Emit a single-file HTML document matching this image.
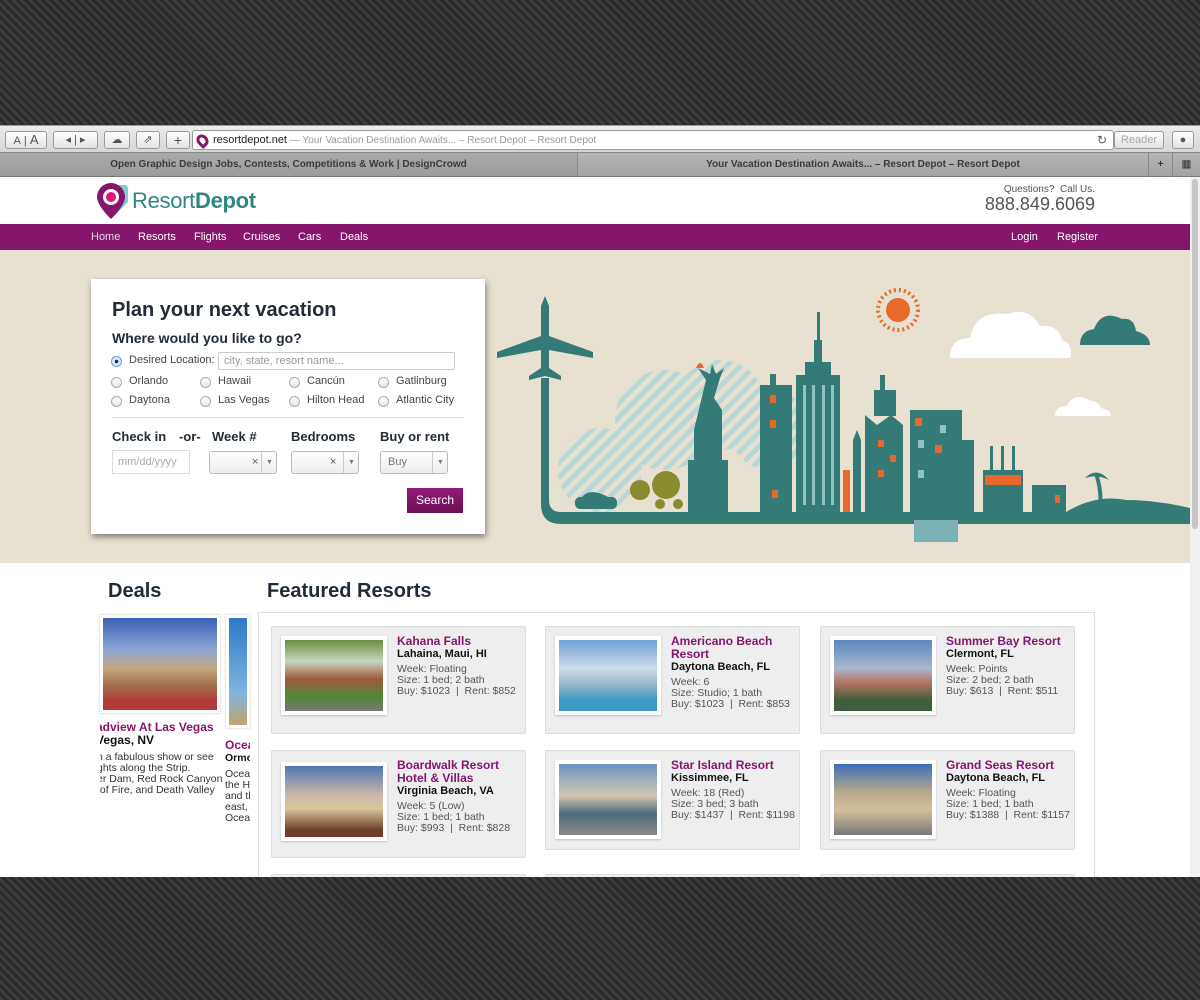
<!DOCTYPE html>
<html><head><meta charset="utf-8">
<style>
*{margin:0;padding:0;box-sizing:border-box}
body{width:1200px;height:1000px;overflow:hidden;font-family:"Liberation Sans",Arial,sans-serif;background:#2e2e2e;position:relative}
.carbon{position:absolute;left:0;width:1200px;background:repeating-linear-gradient(45deg,#3c3c3c 0 3px,#2a2a2a 3px 6px)}
.abs{position:absolute}
.tb{left:0;top:125px;width:1200px;height:28px;background:linear-gradient(#ececec,#d6d6d6);border-top:1px solid #999;border-bottom:1px solid #888}
.btn{position:absolute;top:5px;height:18px;border:1px solid #9a9a9a;border-radius:3px;background:linear-gradient(#fff,#e2e2e2);font-size:11px;color:#555;text-align:center;line-height:16px}
.url{position:absolute;left:192px;top:4px;width:922px;height:20px;background:#fff;border:1px solid #9a9a9a;border-radius:3px;font-size:10px;line-height:18px;color:#999;padding-left:20px}
.tabs{left:0;top:153px;width:1200px;height:24px;background:linear-gradient(#b5b5b5,#a3a3a3);border-bottom:1px solid #777;font-size:10px;font-weight:bold;color:#3a3a3a;line-height:24px}
.page{left:0;top:177px;width:1190px;height:700px;background:#fff;overflow:hidden}
.scroll{left:1190px;top:177px;width:10px;height:700px;background:#f0f0f0}
.nav{position:absolute;left:0;top:47px;width:1190px;height:26px;background:#86166b;color:#fff;font-size:11px;line-height:26px}
.nav span{position:absolute}
.hero{position:absolute;left:0;top:73px;width:1190px;height:313px;background:#e8e0d0}
.form{position:absolute;left:91px;top:29px;width:394px;height:255px;background:#fff;box-shadow:1px 3px 6px rgba(0,0,0,.45)}
.radio{position:absolute;width:11px;height:11px;border:1px solid #aaa;border-radius:50%;background:linear-gradient(#fff,#e6e6e6)}
.lbl{position:absolute;font-size:11px;color:#444}
.sel{position:absolute;height:23px;border:1px solid #bbb;border-radius:3px;background:linear-gradient(#fff,#ececec);font-size:11px;color:#777}
.card{position:absolute;width:255px;background:#eee;border:1px solid #ddd;border-radius:2px}
.ph{position:absolute;left:9px;top:9px;width:106px;height:79px;background:#fff;padding:4px;box-shadow:0 1px 2px rgba(0,0,0,.2)}
.ph div{width:100%;height:100%}
.ct{position:absolute;left:125px;top:8px;font-size:10.5px;line-height:11px;color:#555;white-space:nowrap}
.ct b.t{color:#86166b;font-size:12px;line-height:13px;display:block}
.ct b.l{color:#111;font-size:11px;line-height:13px;display:block}
</style></head><body>
<div class="carbon" style="top:0;height:125px"></div>
<div class="carbon" style="top:877px;height:123px"></div>
<div class="abs tb">
 <div class="btn" style="left:5px;width:42px">A&nbsp;|&nbsp;<span style="font-size:13px">A</span></div>
 <div class="btn" style="left:53px;width:45px">◂ | ▸</div>
 <div class="btn" style="left:104px;width:26px">☁</div>
 <div class="btn" style="left:136px;width:24px">⇗</div>
 <div class="btn" style="left:166px;width:24px;font-size:14px">+</div>
 <div class="url"><span style="position:absolute;left:4px;top:3px;width:11px;height:13px;border-radius:50% 50% 50% 0;transform:rotate(-45deg);border:3px solid #86166b"></span><span style="color:#222;font-size:11px">resortdepot.net</span> — Your Vacation Destination Awaits... – Resort Depot – Resort Depot<span style="position:absolute;right:6px;color:#555;font-size:12px">↻</span></div>
 <div class="btn" style="left:1114px;width:50px;color:#aaa">Reader</div>
 <div class="btn" style="left:1172px;width:22px">●</div>
</div>
<div class="abs tabs">
 <div style="position:absolute;left:0;width:578px;text-align:center;background:linear-gradient(#aaa,#9c9c9c);height:23px;border-right:1px solid #888">Open Graphic Design Jobs, Contests, Competitions &amp; Work | DesignCrowd</div>
 <div style="position:absolute;left:578px;width:570px;text-align:center">Your Vacation Destination Awaits... – Resort Depot – Resort Depot</div>
 <div style="position:absolute;left:1148px;width:24px;text-align:center;border-left:1px solid #888">+</div>
 <div style="position:absolute;left:1172px;width:28px;text-align:center;border-left:1px solid #888">▥</div>
</div>
<div class="abs scroll"><div style="position:absolute;left:2px;top:2px;width:6px;height:350px;background:#c4c4c4;border-radius:3px"></div></div>
<div class="abs page">
 <svg style="position:absolute;left:95px;top:4px" width="36" height="40" viewBox="0 0 36 40">
  <path d="M12 4 h18 a3 3 0 0 1 3 3 v14 l-14 14z" fill="#5ec3c0" opacity=".8"/>
  <path d="M16 2 a14 14 0 0 1 14 14 c0 9 -14 22 -14 22 c0 0 -14 -13 -14 -22 a14 14 0 0 1 14 -14z" fill="#86166b"/>
  <circle cx="16" cy="16" r="8" fill="#fff"/><circle cx="16" cy="16" r="5" fill="#e2127d"/>
 </svg>
 <div style="position:absolute;left:132px;top:11px;font-size:22px;color:#2f8682;letter-spacing:-.3px">Resort<b>Depot</b></div>
 <div style="position:absolute;right:95px;top:7px;text-align:right;color:#555"><div style="font-size:10px">Questions?&nbsp; Call Us.</div><div style="font-size:18px;line-height:18px">888.849.6069</div></div>
 <div class="nav">
  <span style="left:91px;color:#ddd">Home</span><span style="left:138px">Resorts</span><span style="left:194px">Flights</span><span style="left:243px">Cruises</span><span style="left:298px">Cars</span><span style="left:340px">Deals</span>
  <span style="left:1011px">Login</span><span style="left:1057px">Register</span>
 </div>
 <div class="hero">
  <svg style="position:absolute;left:0;top:0" width="1190" height="313" viewBox="0 250 1190 313">
   <defs><pattern id="st" width="10" height="10" patternUnits="userSpaceOnUse" patternTransform="rotate(45)"><rect width="5" height="10" fill="#b7d8d6"/></pattern></defs>
   <circle cx="600" cy="470" r="42" fill="url(#st)"/>
   <circle cx="665" cy="420" r="50" fill="url(#st)"/>
   <circle cx="720" cy="405" r="45" fill="url(#st)"/>
   <circle cx="770" cy="430" r="40" fill="url(#st)"/>
   <circle cx="898" cy="310" r="12" fill="#e8692a"/>
   <circle cx="898" cy="310" r="20" fill="none" stroke="#e8692a" stroke-width="4" stroke-dasharray="2 3"/>
   <path d="M950 358 q0-20 20-20 q5-28 38-24 q20-8 32 12 q18-2 22 14 q12 4 8 18z" fill="#fff"/>
   <path d="M1080 345 q0-14 14-16 q8-20 28-10 q12-2 14 12 q14 4 14 14z" fill="#347b78"/>
   <path d="M1055 416 q0-10 12-10 q6-14 22-6 q10 2 12 8 q10 2 10 8z" fill="#fff"/>
   <g fill="#347b78">
    <path d="M545 296 l4 10 v30 l44 16 v6 l-44 -8 v18 l12 8 v4 l-16 -4 l-16 4 v-4 l12 -8 v-18 l-44 8 v-6 l44 -16 v-30z"/>
    <path d="M541 378 h8 v122 q0 12 12 12 h629 v12 h-629 q-20 0 -20 -20z"/>
    <path d="M706 380 l-8 -12 l12 6 l2 -10 l4 10 l8 -6 l-4 10 l-6 20 l8 12 v50 l6 0 v52 h-40 v-52 h6 v-30z"/>
    <rect x="760" y="385" width="32" height="127"/><rect x="770" y="374" width="6" height="12"/>
    <rect x="796" y="375" width="44" height="137"/><rect x="805" y="362" width="26" height="14"/><rect x="814" y="340" width="8" height="22"/><rect x="817" y="312" width="3" height="30"/>
    <path d="M853 440 l4 -10 l4 10 v72 h-8z"/>
    <path d="M865 415 l12 10 l14 -10 l12 10 v87 h-38z"/><rect x="874" y="390" width="22" height="26"/><rect x="880" y="375" width="5" height="16"/>
    <rect x="910" y="410" width="52" height="102"/><rect x="962" y="440" width="12" height="72"/>
    <rect x="983" y="470" width="40" height="42"/><rect x="990" y="446" width="3" height="24"/><rect x="1001" y="446" width="3" height="24"/><rect x="1012" y="446" width="3" height="24"/>
    <rect x="1032" y="485" width="34" height="27"/>
    <path d="M1066 512 q30 -18 60 -12 q30 0 64 8 v4z"/>
    <path d="M1098 510 q2 -20 -4 -36 l4 0 q6 16 4 36z"/><path d="M1085 478 q12 -12 24 2 q-12 -6 -24 -2z"/>
    <rect x="575" y="497" width="42" height="12" rx="5"/><path d="M582 497 q8 -10 26 0z"/>
    <rect x="692" y="495" width="8" height="17"/><circle cx="696" cy="491" r="4"/>
   </g>
   <g fill="#e8692a"><rect x="843" y="470" width="7" height="42"/><rect x="770" y="395" width="6" height="8"/><rect x="770" y="420" width="6" height="8"/><rect x="915" y="418" width="7" height="8"/><rect x="935" y="445" width="7" height="8"/><rect x="878" y="440" width="6" height="7"/><rect x="890" y="455" width="6" height="7"/><rect x="878" y="470" width="6" height="7"/><rect x="985" y="475" width="36" height="10"/><rect x="1055" y="495" width="5" height="8"/><rect x="772" y="490" width="6" height="8"/><path d="M696 368 q4 -10 8 0z"/></g>
   <g fill="#8a8b2e"><circle cx="640" cy="490" r="10"/><circle cx="666" cy="485" r="14"/><circle cx="660" cy="504" r="5"/><circle cx="678" cy="504" r="5"/></g>
   <g fill="#8fc2c1"><rect x="803" y="385" width="3" height="120"/><rect x="812" y="385" width="3" height="120"/><rect x="822" y="385" width="3" height="120"/><rect x="831" y="385" width="3" height="120"/><rect x="918" y="440" width="6" height="8"/><rect x="940" y="425" width="6" height="8"/><rect x="918" y="470" width="6" height="8"/></g>
   <g fill="#7ab2b6"><rect x="914" y="520" width="44" height="22"/></g>
  </svg>
  <div class="form">
   <div style="position:absolute;left:21px;top:20px;font-size:20px;font-weight:bold;color:#222b38">Plan your next vacation</div>
   <div style="position:absolute;left:21px;top:51px;font-size:14px;font-weight:bold;color:#222b38">Where would you like to go?</div>
   <div class="radio" style="left:20px;top:77px;border-color:#6d9dd8;background:radial-gradient(#223 0 1.5px,#dceaff 2px)"></div>
   <div class="lbl" style="left:38px;top:75px">Desired Location:</div>
   <div style="position:absolute;left:127px;top:73px;width:237px;height:18px;border:1px solid #ccc;border-radius:2px;font-size:11px;color:#999;padding:2px 5px">city, state, resort name...</div>
   <div class="radio" style="left:20px;top:98px"></div><div class="lbl" style="left:38px;top:96px">Orlando</div>
   <div class="radio" style="left:109px;top:98px"></div><div class="lbl" style="left:127px;top:96px">Hawaii</div>
   <div class="radio" style="left:198px;top:98px"></div><div class="lbl" style="left:216px;top:96px">Cancún</div>
   <div class="radio" style="left:287px;top:98px"></div><div class="lbl" style="left:305px;top:96px">Gatlinburg</div>
   <div class="radio" style="left:20px;top:117px"></div><div class="lbl" style="left:38px;top:115px">Daytona</div>
   <div class="radio" style="left:109px;top:117px"></div><div class="lbl" style="left:127px;top:115px">Las Vegas</div>
   <div class="radio" style="left:198px;top:117px"></div><div class="lbl" style="left:216px;top:115px">Hilton Head</div>
   <div class="radio" style="left:287px;top:117px"></div><div class="lbl" style="left:305px;top:115px">Atlantic City</div>
   <div style="position:absolute;left:21px;top:138px;width:352px;height:1px;background:#ddd"></div>
   <div style="position:absolute;left:21px;top:150px;font-size:13px;font-weight:bold;color:#222b38">Check in</div>
   <div style="position:absolute;left:88px;top:150px;font-size:13px;font-weight:bold;color:#222b38">-or-</div>
   <div style="position:absolute;left:121px;top:150px;font-size:13px;font-weight:bold;color:#222b38">Week #</div>
   <div style="position:absolute;left:200px;top:150px;font-size:13px;font-weight:bold;color:#222b38">Bedrooms</div>
   <div style="position:absolute;left:289px;top:150px;font-size:13px;font-weight:bold;color:#222b38">Buy or rent</div>
   <div style="position:absolute;left:21px;top:171px;width:78px;height:24px;border:1px solid #ddd;font-size:11px;color:#aaa;padding:5px 5px">mm/dd/yyyy</div>
   <div class="sel" style="left:118px;top:172px;width:68px"><span style="position:absolute;left:42px;top:4px;color:#555">×</span><span style="position:absolute;left:51px;top:0;height:21px;border-left:1px solid #ccc;width:16px;text-align:center;font-size:7px;line-height:21px">▼</span></div>
   <div class="sel" style="left:200px;top:172px;width:68px"><span style="position:absolute;left:38px;top:4px;color:#555">×</span><span style="position:absolute;left:51px;top:0;height:21px;border-left:1px solid #ccc;width:16px;text-align:center;font-size:7px;line-height:21px">▼</span></div>
   <div class="sel" style="left:289px;top:172px;width:68px"><span style="position:absolute;left:7px;top:4px">Buy</span><span style="position:absolute;left:51px;top:0;height:21px;border-left:1px solid #ccc;width:16px;text-align:center;font-size:7px;line-height:21px">▼</span></div>
   <div style="position:absolute;left:316px;top:209px;width:56px;height:25px;background:linear-gradient(#931a77,#6e0f57);color:#fff;font-size:12px;text-align:center;line-height:25px">Search</div>
  </div>
 </div>
 <div style="position:absolute;left:108px;top:403px;font-size:20px;font-weight:bold;color:#222b38">Deals</div>
 <div style="position:absolute;left:267px;top:403px;font-size:20px;font-weight:bold;color:#222b38">Featured Resorts</div>
 <div style="position:absolute;left:100px;top:438px;width:120px;height:98px;background:linear-gradient(#3a62b8 0,#8fa6d4 35%,#c3a77d 55%,#a06a48 75%,#b33a3a 90%);border:3px solid #fff;box-shadow:0 0 2px #bbb"></div>
 <div style="position:absolute;left:226px;top:438px;width:24px;height:113px;background:linear-gradient(#2b7ac8,#7fb5de 70%,#c1a56c);border:3px solid #fff;box-shadow:0 0 2px #bbb"></div>
 <div style="position:absolute;left:100px;top:544px;width:122px;overflow:hidden;white-space:nowrap;font-size:10.5px;line-height:11px;color:#333">
  <div style="color:#86166b;font-size:12px;line-height:13px;font-weight:bold;margin-left:-4px">adview At Las Vegas</div>
  <div style="color:#111;font-weight:bold;margin-left:-4px;font-size:12px;line-height:13px">Vegas, NV</div>
  <div style="margin-top:5px;margin-left:-3px">n a fabulous show or see<br>ghts along the Strip.<br>er Dam, Red Rock Canyon,<br>&nbsp;of Fire, and Death Valley</div>
 </div>
 <div style="position:absolute;left:225px;top:562px;width:25px;overflow:hidden;white-space:nowrap;font-size:10.5px;line-height:11px;color:#333">
  <div style="color:#86166b;font-size:12px;line-height:13px;font-weight:bold">Ocean</div>
  <div style="color:#111;font-weight:bold;line-height:13px">Ormond</div>
  <div style="margin-top:4px">Ocean<br>the Ha<br>and th<br>east,<br>Ocean</div>
 </div>
 <div style="position:absolute;left:258px;top:435px;width:837px;height:300px;border:1px solid #ddd;border-bottom:none"></div>

 <div class="card" style="left:271px;top:449px;height:108px"><div class="ph"><div style="background:linear-gradient(#6a8d3e,#c7d6c0 30%,#a0583d 55%,#4e8a34 80%,#777)"></div></div>
  <div class="ct"><b class="t">Kahana Falls</b><b class="l">Lahaina, Maui, HI</b><div style="margin-top:3px">Week: Floating<br>Size: 1 bed; 2 bath<br>Buy: $1023 &nbsp;|&nbsp; Rent: $852</div></div></div>
 <div class="card" style="left:545px;top:449px;height:108px"><div class="ph"><div style="background:linear-gradient(#6fa2d6,#cfdcea 40%,#9fb9c9 60%,#3a9ac4 85%)"></div></div>
  <div class="ct"><b class="t">Americano Beach<br>Resort</b><b class="l">Daytona Beach, FL</b><div style="margin-top:3px">Week: 6<br>Size: Studio; 1 bath<br>Buy: $1023 &nbsp;|&nbsp; Rent: $853</div></div></div>
 <div class="card" style="left:820px;top:449px;height:108px"><div class="ph"><div style="background:linear-gradient(#5d86bf,#a9b7cf 40%,#b57462 60%,#3d5f3c 85%)"></div></div>
  <div class="ct"><b class="t">Summer Bay Resort</b><b class="l">Clermont, FL</b><div style="margin-top:3px">Week: Points<br>Size: 2 bed; 2 bath<br>Buy: $613 &nbsp;|&nbsp; Rent: $511</div></div></div>

 <div class="card" style="left:271px;top:573px;height:108px"><div class="ph" style="top:11px"><div style="background:linear-gradient(#4e77b2,#c9b6a8 40%,#d9c79a 60%,#6f3e2a 90%)"></div></div>
  <div class="ct"><b class="t">Boardwalk Resort<br>Hotel &amp; Villas</b><b class="l">Virginia Beach, VA</b><div style="margin-top:3px">Week: 5 (Low)<br>Size: 1 bed; 1 bath<br>Buy: $993 &nbsp;|&nbsp; Rent: $828</div></div></div>
 <div class="card" style="left:545px;top:573px;height:100px"><div class="ph"><div style="background:linear-gradient(#6c95c7,#d3c6b0 45%,#4d6c7a 70%,#8a8a8a)"></div></div>
  <div class="ct"><b class="t">Star Island Resort</b><b class="l">Kissimmee, FL</b><div style="margin-top:3px">Week: 18 (Red)<br>Size: 3 bed; 3 bath<br>Buy: $1437 &nbsp;|&nbsp; Rent: $1198</div></div></div>
 <div class="card" style="left:820px;top:573px;height:100px"><div class="ph"><div style="background:linear-gradient(#3e6fb8,#b8a98c 40%,#d2c09a 65%,#777)"></div></div>
  <div class="ct"><b class="t">Grand Seas Resort</b><b class="l">Daytona Beach, FL</b><div style="margin-top:3px">Week: Floating<br>Size: 1 bed; 1 bath<br>Buy: $1388 &nbsp;|&nbsp; Rent: $1157</div></div></div>
 <div class="card" style="left:271px;top:697px;height:20px"></div>
 <div class="card" style="left:545px;top:697px;height:20px"></div>
 <div class="card" style="left:820px;top:697px;height:20px"></div>
</div>
</body></html>
